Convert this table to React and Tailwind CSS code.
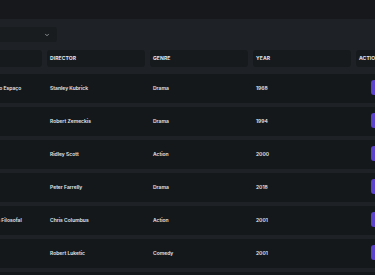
import { ChevronDown } from 'lucide-react'

const movies = [
    { title: '2001: Uma Odisseia no Espaço', director: 'Stanley Kubrick', genre: 'Drama', year: 1968 },
    { title: 'Forrest Gump', director: 'Robert Zemeckis', genre: 'Drama', year: 1994 },
    { title: 'Gladiador', director: 'Ridley Scott', genre: 'Action', year: 2000 },
    { title: 'Green Book', director: 'Peter Farrelly', genre: 'Drama', year: 2018 },
    { title: 'Harry Potter e a Pedra Filosofal', director: 'Chris Columbus', genre: 'Action', year: 2001 },
    { title: 'Legalmente Loira', director: 'Robert Luketic', genre: 'Comedy', year: 2001 },
    { title: 'Matrix', director: 'Lana Wachowski', genre: 'Action', year: 1999 },
]

const headers = ['TITLE', 'DIRECTOR', 'GENRE', 'YEAR', 'ACTIONS']

export default function App() {
    return (
        <div className="w-[375px] h-[275px] overflow-hidden bg-[#1e2226] font-['Inter',sans-serif] text-[#e5e7eb]">
            {/* Top bar */}
            <div className="h-[19px] bg-[#16181b]" />

            <div className="-ml-[56px] w-[520px] pt-[8px]">
                {/* Filter select */}
                <div className="-ml-[6px] w-[119px] h-[15px] rounded-[3px] bg-[#191c1f] flex items-center justify-end pr-[7px]">
                    <ChevronDown size={6} strokeWidth={2.5} className="text-[#c7cbd1]" />
                </div>

                {/* Table header */}
                <div className="mt-[8px] grid grid-cols-[98px_98px_98px_98px_98px] gap-[5px]">
                    {headers.map((h) => (
                        <div
                            key={h}
                            className="h-[17px] rounded-[3px] bg-[#171a1d] flex items-center px-[3px] text-[5px] font-bold tracking-[0.02em]"
                        >
                            {h}
                        </div>
                    ))}
                </div>

                {/* Rows */}
                <div className="mt-[7px] flex flex-col gap-[4px]">
                    {movies.map((m) => (
                        <div
                            key={m.title}
                            className="h-[29px] bg-[#15181b] grid grid-cols-[98px_98px_98px_98px_98px] gap-[5px] items-center text-[5px] font-semibold"
                        >
                            <div className="px-[3px] whitespace-nowrap">{m.title}</div>
                            <div className="px-[3px] whitespace-nowrap">{m.director}</div>
                            <div className="px-[3px] whitespace-nowrap">{m.genre}</div>
                            <div className="px-[3px] whitespace-nowrap">{m.year}</div>
                            <div className="pl-[15px] flex gap-[3px] -mt-[3px]">
                                <div className="h-[15px] w-[24px] rounded-[3px] bg-[#5b42cc]" />
                                <div className="h-[15px] w-[24px] rounded-[3px] bg-[#dc2626]" />
                            </div>
                        </div>
                    ))}
                </div>
            </div>
        </div>
    )
}
